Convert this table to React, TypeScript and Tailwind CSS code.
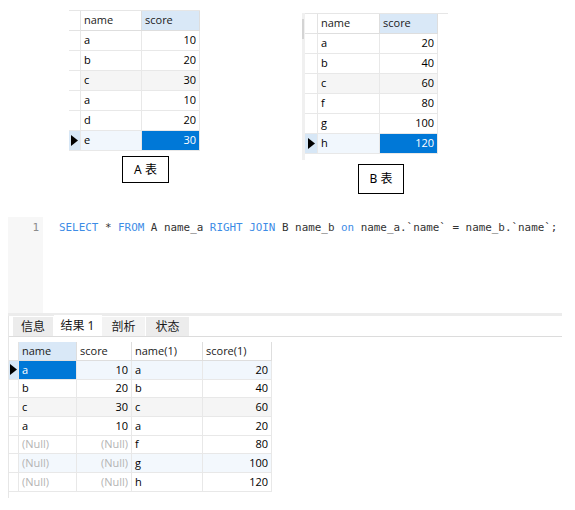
import React from 'react'

type GridProps = {
  widths: number[]
  header: string[]
  rows: string[][]
  right: boolean[]
  indW: number
  headH: number
  rowH: number
  selHead: number
  sel: [number, number]
  cur: number
  tints?: Record<number, string>
}

const Grid = ({ widths, header, rows, right, indW, headH, rowH, selHead, sel, cur, tints = {} }: GridProps) => {
  return (
    <div className="flex flex-col text-[11px] text-black" style={{ fontFamily: '"Open Sans", "Noto Sans", sans-serif' }}>
      <div className="flex" style={{ height: headH }}>
        <div className="border-r border-b border-[#e3e3e3] bg-white" style={{ width: indW }} />
        {header.map((h, i) => (
          <div
            key={i}
            className={`flex items-center px-[3px] border-r border-b border-[#dedede] text-[#1a1a1a] ${i === selHead ? 'bg-[#d9e8f7]' : 'bg-white'}`}
            style={{ width: widths[i] }}
          >
            {h}
          </div>
        ))}
      </div>
      {rows.map((r, ri) => {
        const isCur = ri === cur
        const bg = isCur ? 'bg-[#f1f7fd]' : tints[ri] ?? 'bg-white'
        return (
          <div key={ri} className="flex" style={{ height: rowH }}>
            <div
              className={`flex items-center justify-center border-r border-b border-[#e8e8e8] ${isCur ? 'bg-[#d7e7f6]' : 'bg-white'}`}
              style={{ width: indW }}
            >
              {isCur && (
                <svg width="7" height="11" viewBox="0 0 7 11">
                  <path d="M0 0 L7 5.5 L0 11 Z" fill="#000" />
                </svg>
              )}
            </div>
            {r.map((v, ci) => {
              const isSel = sel[0] === ri && sel[1] === ci
              const nul = v === '(Null)'
              return (
                <div
                  key={ci}
                  className={`flex items-center px-[3px] border-r border-b border-[#e8e8e8] ${right[ci] ? 'justify-end' : ''} ${isSel ? 'bg-[#0078d7] text-white' : bg} ${nul && !isSel ? 'text-[#b4b4b4]' : ''}`}
                  style={{ width: widths[ci] }}
                >
                  {v}
                </div>
              )
            })}
          </div>
        )
      })}
    </div>
  )
}

const Kw = ({ children }: { children: React.ReactNode }) => <span className="text-[#3d8ce6]">{children}</span>

const Tab = ({ label, w, active, bg }: { label: string; w: number; active?: boolean; bg: string }) => (
  <div
    className={`flex items-center justify-center border-r border-white ${bg} ${active ? 'h-[21px]' : 'h-[19px]'}`}
    style={{ width: w }}
  >
    {label}
  </div>
)

const App = () => {
  const tableA = [['a', '10'], ['b', '20'], ['c', '30'], ['a', '10'], ['d', '20'], ['e', '30']]
  const tableB = [['a', '20'], ['b', '40'], ['c', '60'], ['f', '80'], ['g', '100'], ['h', '120']]
  const result = [
    ['a', '10', 'a', '20'],
    ['b', '20', 'b', '40'],
    ['c', '30', 'c', '60'],
    ['a', '10', 'a', '20'],
    ['(Null)', '(Null)', 'f', '80'],
    ['(Null)', '(Null)', 'g', '100'],
    ['(Null)', '(Null)', 'h', '120'],
  ]
  const cjk = '"Noto Sans", "Noto Sans CJK SC", sans-serif'

  return (
    <div className="w-[575px] h-[510px] bg-white overflow-hidden flex flex-col">
      {/* two source tables */}
      <div className="h-[217px] flex items-start">
        <div className="ml-[69px] mt-[10px] flex flex-col">
          <div className="h-px w-[131px] bg-[#e6e6e6]" />
          <Grid
            widths={[61, 58]}
            header={['name', 'score']}
            rows={tableA}
            right={[false, true]}
            indW={12}
            headH={20}
            rowH={20}
            selHead={1}
            sel={[5, 1]}
            cur={5}
            tints={{ 2: 'bg-[#f5f5f5]' }}
          />
          <div
            className="ml-[53px] mt-[5px] w-[47px] h-[27px] border border-black flex items-center justify-center text-[12px] text-black"
            style={{ fontFamily: cjk }}
          >
            A 表
          </div>
        </div>

        <div className="ml-[102px] mt-[13px] flex flex-col">
          <div className="flex">
            <div className="w-[3px] h-[147px] bg-[#f0f0f0] flex flex-col">
              <div className="mt-[6px] h-[20px] w-[2px] bg-[#d4d4d4]" />
            </div>
            <div className="flex flex-col">
              <div className="h-px w-[143px] bg-[#e6e6e6]" />
              <Grid
                widths={[62, 58]}
                header={['name', 'score']}
                rows={tableB}
                right={[false, true]}
                indW={13}
                headH={20}
                rowH={20}
                selHead={1}
                sel={[5, 1]}
                cur={5}
                tints={{ 2: 'bg-[#f5f5f5]' }}
              />
            </div>
          </div>
          <div
            className="ml-[56px] mt-[4px] w-[46px] h-[30px] border border-black flex items-center justify-center text-[12px] text-black"
            style={{ fontFamily: cjk }}
          >
            B 表
          </div>
        </div>
      </div>

      {/* sql editor */}
      <div className="ml-[8px] w-[554px] h-[96px] flex bg-white">
        <div className="w-[35px] bg-[#f7f7f7] pt-[2px] pr-[4px] text-right text-[11px] text-[#8c8c8c] leading-[18px]" style={{ fontFamily: '"DejaVu Sans Mono", monospace' }}>
          1
        </div>
        <div className="pl-[16px] pt-[2px] text-[10.9px] leading-[18px] text-[#333] whitespace-pre" style={{ fontFamily: '"DejaVu Sans Mono", monospace' }}>
          <Kw>SELECT</Kw> * <Kw>FROM</Kw> A name_a <Kw>RIGHT</Kw> <Kw>JOIN</Kw> B name_b <Kw>on</Kw> name_a.`name` = name_b.`name`;
        </div>
      </div>
      <div className="ml-[8px] w-[554px] h-[3px] bg-[#ececec]" />

      {/* result panel */}
      <div className="ml-[8px] w-[554px] h-[182px] border-l border-[#e6e6e6] flex flex-col">
        <div className="h-[21px] border-b border-[#dcdcdc] flex items-end pl-[4px] text-[12px] text-[#1a1a1a]" style={{ fontFamily: cjk }}>
          <Tab label="信息" w={41} bg="bg-[#ececec]" />
          <Tab label="结果 1" w={48} bg="bg-white" active />
          <Tab label="剖析" w={44} bg="bg-[#f3f3f3]" />
          <Tab label="状态" w={44} bg="bg-[#ececec]" />
        </div>
        <div className="mt-[5px]">
          <Grid
            widths={[58, 55, 71, 69]}
            header={['name', 'score', 'name(1)', 'score(1)']}
            rows={result}
            right={[false, true, false, true]}
            indW={10}
            headH={19}
            rowH={18.7}
            selHead={0}
            sel={[0, 0]}
            cur={0}
            tints={{ 2: 'bg-[#f5f5f5]', 5: 'bg-[#f3f8fd]' }}
          />
        </div>
      </div>
    </div>
  )
}

export default App
